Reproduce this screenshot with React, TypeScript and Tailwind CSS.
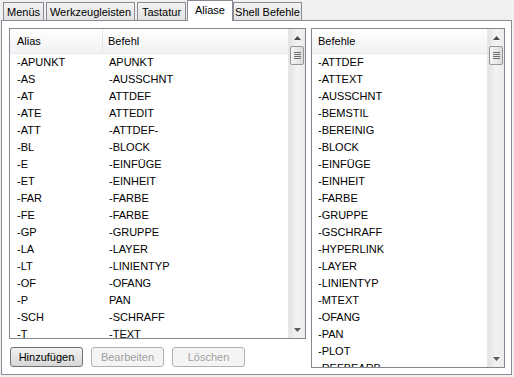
import React from "react";

const aliases: [string, string][] = [
  ["-APUNKT", "APUNKT"],
  ["-AS", "-AUSSCHNT"],
  ["-AT", "ATTDEF"],
  ["-ATE", "ATTEDIT"],
  ["-ATT", "-ATTDEF-"],
  ["-BL", "-BLOCK"],
  ["-E", "-EINFÜGE"],
  ["-ET", "-EINHEIT"],
  ["-FAR", "-FARBE"],
  ["-FE", "-FARBE"],
  ["-GP", "-GRUPPE"],
  ["-LA", "-LAYER"],
  ["-LT", "-LINIENTYP"],
  ["-OF", "-OFANG"],
  ["-P", "PAN"],
  ["-SCH", "-SCHRAFF"],
  ["-T", "-TEXT"],
];

const befehle = [
  "-ATTDEF",
  "-ATTEXT",
  "-AUSSCHNT",
  "-BEMSTIL",
  "-BEREINIG",
  "-BLOCK",
  "-EINFÜGE",
  "-EINHEIT",
  "-FARBE",
  "-GRUPPE",
  "-GSCHRAFF",
  "-HYPERLINK",
  "-LAYER",
  "-LINIENTYP",
  "-MTEXT",
  "-OFANG",
  "-PAN",
  "-PLOT",
  "-REFBEARB",
];

function UpArrow() {
  return (
    <svg width="7" height="4" viewBox="0 0 7 4">
      <polygon points="3.5,0 7,4 0,4" fill="#4a4a4a" />
    </svg>
  );
}
function DownArrow() {
  return (
    <svg width="7" height="4" viewBox="0 0 7 4">
      <polygon points="0,0 7,0 3.5,4" fill="#5a5a5a" />
    </svg>
  );
}

function Scrollbar() {
  return (
    <div className="w-[17px] h-full flex flex-col bg-gradient-to-r from-[#e3e3e3] via-[#f3f3f3] to-[#ececec] border-l border-[#e8e8e8]">
      <div className="h-[17px] flex items-center justify-center shrink-0">
        <UpArrow />
      </div>
      <div className="h-[19px] mx-[1px] rounded-[2px] border border-[#979797] bg-gradient-to-r from-[#f6f6f6] to-[#dcdcdc] flex flex-col items-center justify-center gap-[1px] shrink-0">
        <div className="w-[7px] h-[1px] bg-[#6e6e6e]" />
        <div className="w-[7px] h-[1px] bg-[#6e6e6e]" />
        <div className="w-[7px] h-[1px] bg-[#6e6e6e]" />
        <div className="w-[7px] h-[1px] bg-[#6e6e6e]" />
      </div>
      <div className="flex-1" />
      <div className="h-[17px] flex items-center justify-center shrink-0">
        <DownArrow />
      </div>
    </div>
  );
}

function Tab({ label, w, ml, active }: { label: string; w: string; ml: string; active?: boolean }) {
  if (active) {
    return (
      <div
        className={`${w} ${ml} h-[21px] bg-white border border-b-0 border-[#898c95] flex items-start justify-center pt-[4px] relative z-10 -mb-px`}
      >
        {label}
      </div>
    );
  }
  return (
    <div
      className={`${w} ${ml} h-[18px] bg-gradient-to-b from-[#f3f3f3] to-[#e2e2e2] border border-b-0 border-[#898c95] flex items-center justify-center pt-[1px]`}
    >
      {label}
    </div>
  );
}

export default function App() {
  return (
    <div
      className="w-[514px] h-[377px] bg-[#f0f0f0] text-[11px] text-black leading-none overflow-hidden px-[1px]"
      style={{ fontFamily: '"Liberation Sans", Arial, sans-serif' }}
    >
      <div className="h-[20px] flex items-end">
        <Tab label="Menüs" w="w-[41px]" ml="ml-[2px]" />
        <Tab label="Werkzeugleisten" w="w-[89px]" ml="ml-[2px]" />
        <Tab label="Tastatur" w="w-[49px]" ml="ml-[2px]" />
        <Tab label="Aliase" w="w-[46px]" ml="ml-[1px]" active />
        <Tab label="Shell Befehle" w="w-[69px]" ml="ml-0" />
      </div>
      <div className="w-[511px] h-[355px] bg-white border border-[#898c95] flex pl-[7px] pt-[7px] gap-[5px]">
        <div className="w-[297px] flex flex-col">
          <div className="h-[311px] border border-[#828790] bg-white flex">
            <div className="flex-1 flex flex-col overflow-hidden">
              <div className="h-[25px] shrink-0 flex bg-gradient-to-b from-white to-[#f1f2f4] border-b border-[#e6e8ec]">
                <div className="w-[93px] pl-[7px] pt-[1px] flex items-center border-r border-[#e3e5e8]">Alias</div>
                <div className="flex-1 pl-[5px] pt-[1px] flex items-center">Befehl</div>
              </div>
              {aliases.map(([a, b], i) => (
                <div key={i} className="h-[17px] shrink-0 flex items-center">
                  <div className="w-[93px] pl-[7px]">{a}</div>
                  <div className="flex-1 pl-[6px]">{b}</div>
                </div>
              ))}
            </div>
            <Scrollbar />
          </div>
          <div className="mt-[8px] flex gap-[8px] pl-[1px]">
            <button className="w-[73px] h-[20px] rounded-[3px] border border-[#707070] bg-gradient-to-b from-[#f2f2f2] to-[#d6d6d6] text-black">
              Hinzufügen
            </button>
            <button className="w-[73px] h-[20px] rounded-[3px] border border-[#adb2b5] bg-[#f4f4f4] text-[#a0a0a0]">
              Bearbeiten
            </button>
            <button className="w-[73px] h-[20px] rounded-[3px] border border-[#adb2b5] bg-[#f4f4f4] text-[#a0a0a0]">
              Löschen
            </button>
          </div>
        </div>
        <div className="w-[194px] h-[340px] border border-[#828790] bg-white flex">
          <div className="flex-1 flex flex-col overflow-hidden">
            <div className="h-[25px] shrink-0 flex items-center pl-[6px] pt-[1px] bg-gradient-to-b from-white to-[#f1f2f4] border-b border-[#e6e8ec]">
              Befehle
            </div>
            {befehle.map((b, i) => (
              <div key={i} className="h-[17px] shrink-0 flex items-center pl-[6px]">
                {b}
              </div>
            ))}
          </div>
          <Scrollbar />
        </div>
      </div>
    </div>
  );
}
